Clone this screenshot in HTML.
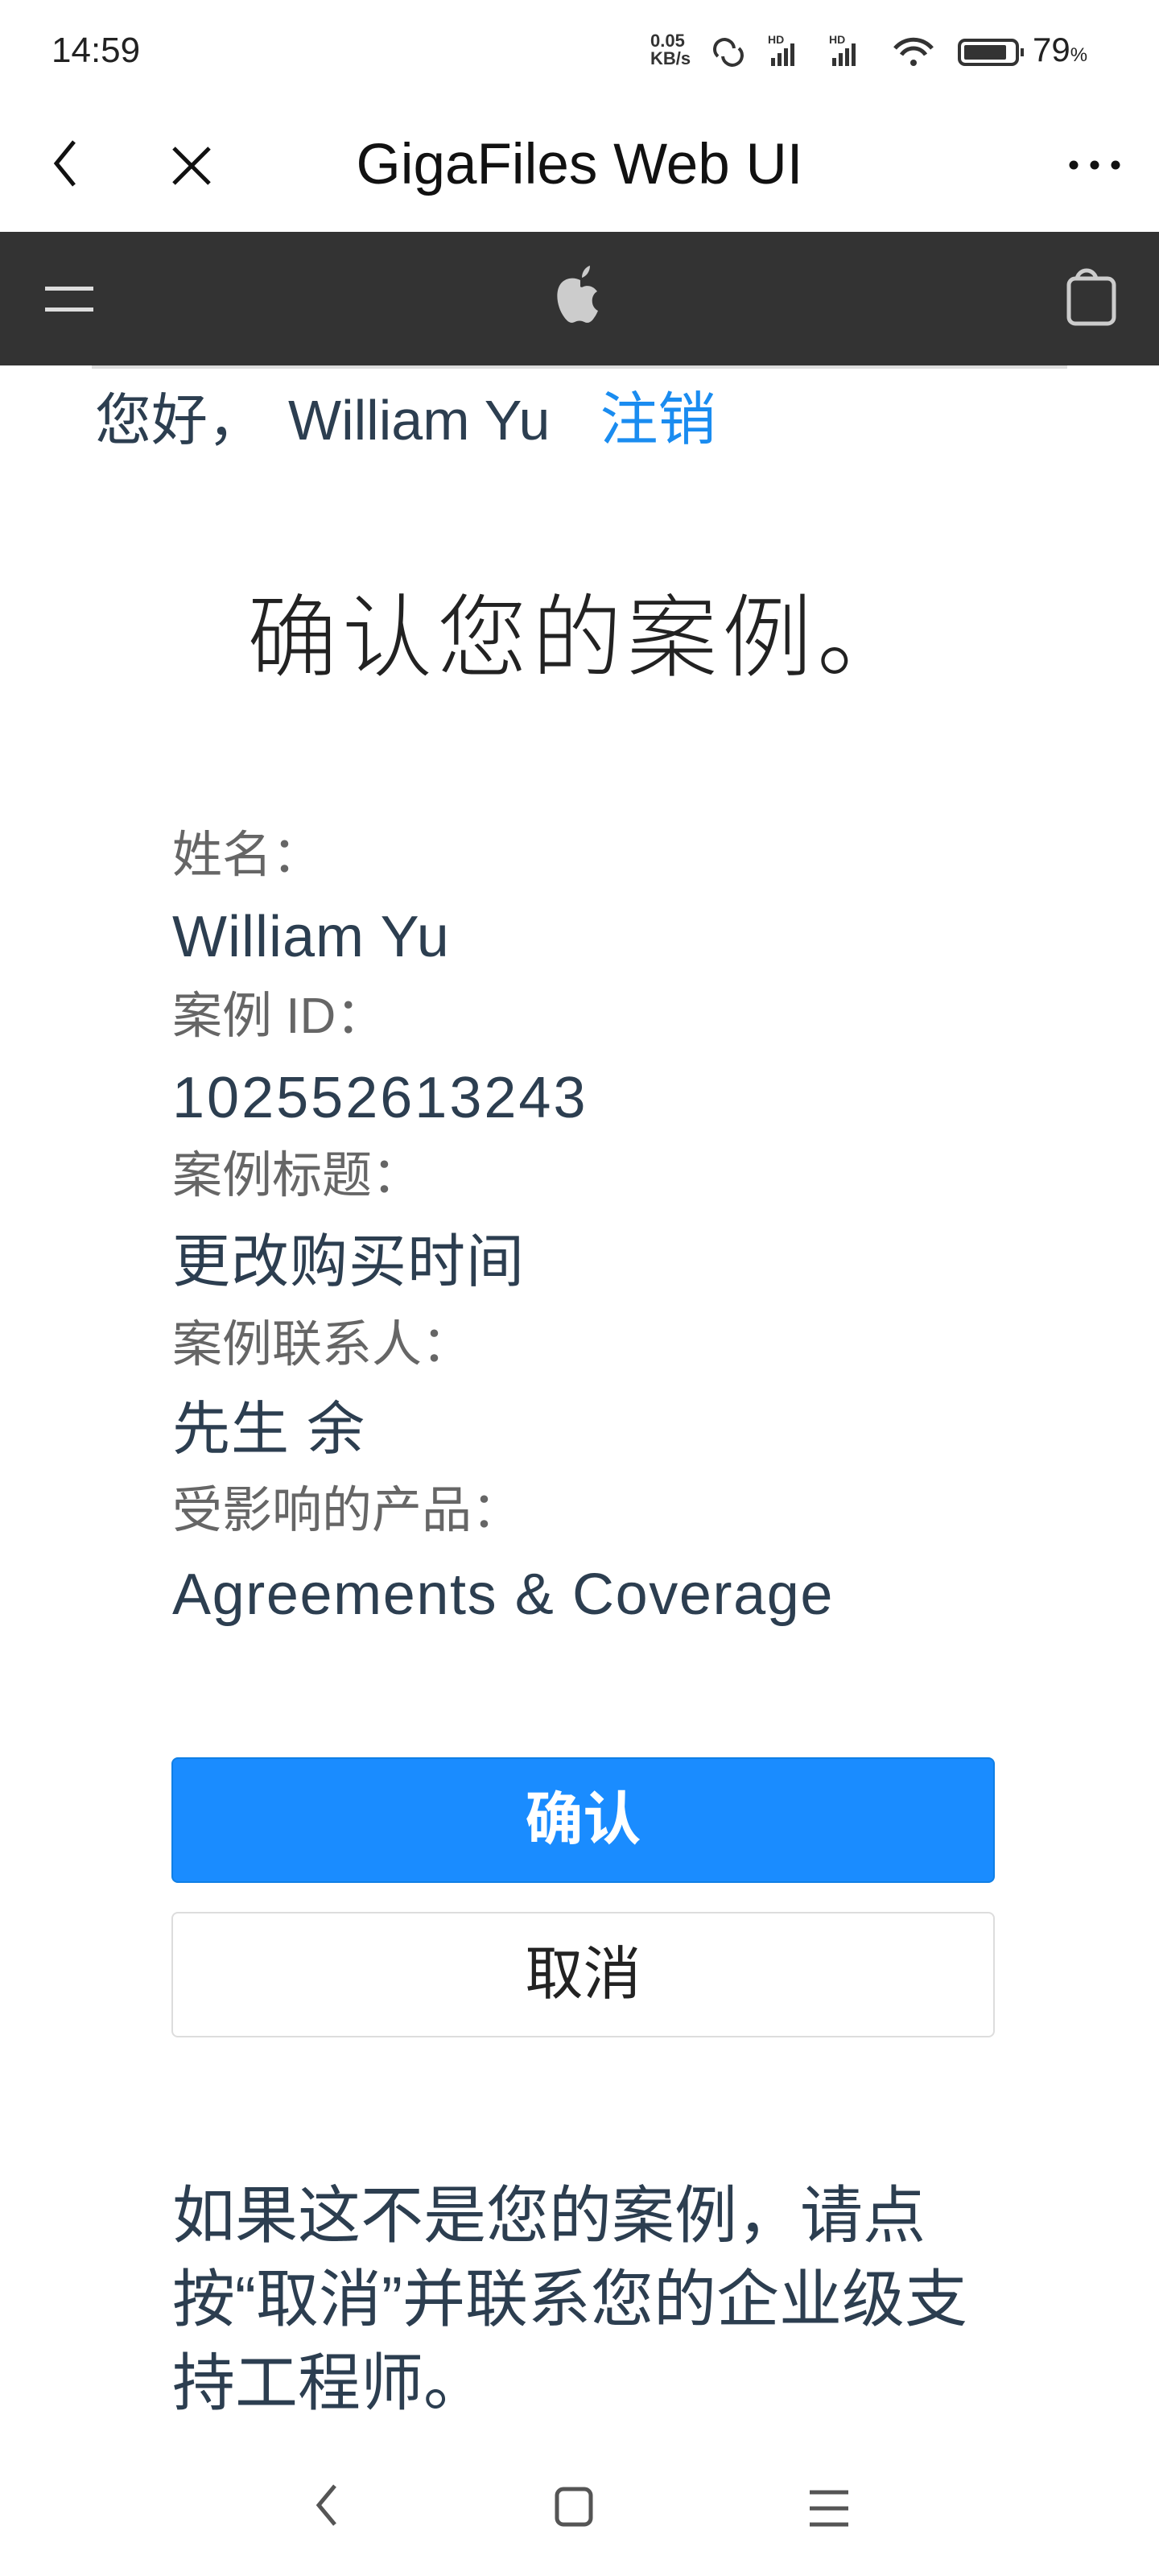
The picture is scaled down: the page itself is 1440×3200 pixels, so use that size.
<!DOCTYPE html>
<html><head><meta charset="utf-8"><style>
*{margin:0;padding:0;box-sizing:border-box}
body{width:1440px;height:3200px;background:#fff;position:relative;overflow:hidden;font-family:"Liberation Sans","Noto Sans CJK SC",sans-serif}
.a{position:absolute;white-space:nowrap}
.lab{left:214px;font-size:62px;color:#666;line-height:1}
.val{left:214px;font-size:72px;color:#2c3e50;line-height:1;letter-spacing:1px}
</style></head><body>
<div class="a" style="left:64px;top:38px;font-size:44px;color:#222">14:59</div>
<div class="a" style="left:808px;top:40px;font-size:22px;font-weight:bold;color:#333;line-height:22px">0.05<br>KB/s</div>
<svg class="a" style="left:880px;top:40px" width="500" height="50" viewBox="0 0 500 50">
<path d="M12 30a12 12 0 1 1 20 -10M38 20a12 12 0 1 1 -20 10" fill="none" stroke="#333" stroke-width="4"/>
<g fill="#333"><rect x="78" y="32" width="5" height="10"/><rect x="86" y="26" width="5" height="16"/><rect x="94" y="20" width="5" height="22"/><rect x="102" y="14" width="5" height="28"/>
<rect x="154" y="32" width="5" height="10"/><rect x="162" y="26" width="5" height="16"/><rect x="170" y="20" width="5" height="22"/><rect x="178" y="14" width="5" height="28"/></g>
<text x="74" y="14" font-size="14" font-weight="bold" fill="#333" font-family="Liberation Sans">HD</text>
<text x="150" y="14" font-size="14" font-weight="bold" fill="#333" font-family="Liberation Sans">HD</text>
<path d="M232 20a30 30 0 0 1 46 0M240 28a18 18 0 0 1 30 0" fill="none" stroke="#333" stroke-width="5"/><circle cx="255" cy="38" r="4" fill="#333"/>
<rect x="312" y="10" width="72" height="30" rx="7" fill="none" stroke="#333" stroke-width="4"/><rect x="318" y="16" width="52" height="18" rx="2" fill="#333"/><rect x="388" y="20" width="4" height="10" fill="#333"/>
</svg>
<div class="a" style="left:1283px;top:38px;font-size:42px;color:#222">79<span style="font-size:24px">%</span></div>
<svg class="a" style="left:56px;top:170px" width="50" height="66"><path d="M36 6L14 33L36 60" fill="none" stroke="#111" stroke-width="5"/></svg>
<svg class="a" style="left:210px;top:178px" width="56" height="56"><path d="M6 6L50 50M50 6L6 50" stroke="#111" stroke-width="5"/></svg>
<div class="a" style="left:0;width:1440px;text-align:center;top:164px;font-size:71px;color:#111">GigaFiles Web UI</div>
<svg class="a" style="left:1326px;top:190px" width="70" height="30"><circle cx="8" cy="15" r="5.5" fill="#111"/><circle cx="34" cy="15" r="5.5" fill="#111"/><circle cx="60" cy="15" r="5.5" fill="#111"/></svg>
<div class="a" style="left:0;top:288px;width:1440px;height:166px;background:#333"></div>
<div class="a" style="left:114px;top:454px;width:1212px;height:4px;background:#ddd"></div>
<div class="a" style="left:56px;top:356px;width:60px;height:5px;background:#ddd"></div>
<div class="a" style="left:56px;top:382px;width:60px;height:5px;background:#ddd"></div>
<svg class="a" style="left:686px;top:328px" width="70" height="80" viewBox="0 0 70 80"><path d="M35 20c-8-4-18-3-24 4-8 10-5 30 4 42 5 7 9 8 13 6 4-2 8-2 12 0 4 2 8 1 12-5 3-4 4-7 5-9-9-4-10-19-1-24-5-7-12-8-17-6-2 1-3 1-4 0zM37 17c0-7 4-13 10-15 0 7-4 13-10 15z" fill="#ccc"/></svg>
<svg class="a" style="left:1322px;top:326px" width="70" height="80"><path d="M16 22a12 12 0 0 1 24 0" fill="none" stroke="#ccc" stroke-width="5"/><rect x="6" y="20" width="56" height="56" rx="8" fill="none" stroke="#ccc" stroke-width="5"/></svg>
<div class="a" style="left:118px;top:462px;font-size:70px;color:#2c3e50">您好，<span style="margin-left:30px">William Yu</span><span style="color:#1a8cf0;margin-left:62px;font-size:72px">注销</span></div>
<div class="a" style="left:0;width:1440px;text-align:center;top:702px;font-size:112px;color:#222;font-weight:300;letter-spacing:6px">确认您的案例。</div>
<div class="a lab" style="top:1032px">姓名：</div>
<div class="a val" style="top:1128px">William Yu</div>
<div class="a lab" style="top:1232px">案例 ID：</div>
<div class="a val" style="top:1328px;letter-spacing:3px">102552613243</div>
<div class="a lab" style="top:1430px">案例标题：</div>
<div class="a val" style="top:1532px">更改购买时间</div>
<div class="a lab" style="top:1640px">案例联系人：</div>
<div class="a val" style="top:1740px">先生 余</div>
<div class="a lab" style="top:1846px">受影响的产品：</div>
<div class="a val" style="top:1945px;letter-spacing:1.6px">Agreements &amp; Coverage</div>
<div class="a" style="left:213px;top:2183px;width:1023px;height:156px;background:#1a8cff;border:2px solid #0f7fe6;border-radius:8px;color:#fff;font-size:72px;font-weight:bold;text-align:center;line-height:152px">确认</div>
<div class="a" style="left:213px;top:2375px;width:1023px;height:156px;background:#fff;border:2px solid #ddd;border-radius:8px;color:#222;font-size:72px;text-align:center;line-height:152px">取消</div>
<div class="a" style="left:214px;top:2700px;font-size:78px;color:#2c3e50;line-height:104px;white-space:normal;width:1020px">如果这不是您的案例，请点<br>按“取消”并联系您的企业级支<br>持工程师。</div>
<svg class="a" style="left:380px;top:3080px" width="50" height="64"><path d="M36 8L16 32L36 56" fill="none" stroke="#555" stroke-width="5"/></svg>
<svg class="a" style="left:686px;top:3086px" width="60" height="60"><rect x="6" y="6" width="42" height="44" rx="8" fill="none" stroke="#555" stroke-width="5"/></svg>
<svg class="a" style="left:1000px;top:3088px" width="60" height="56"><path d="M6 8H54M6 28H54M6 48H54" stroke="#555" stroke-width="5"/></svg>
</body></html>
